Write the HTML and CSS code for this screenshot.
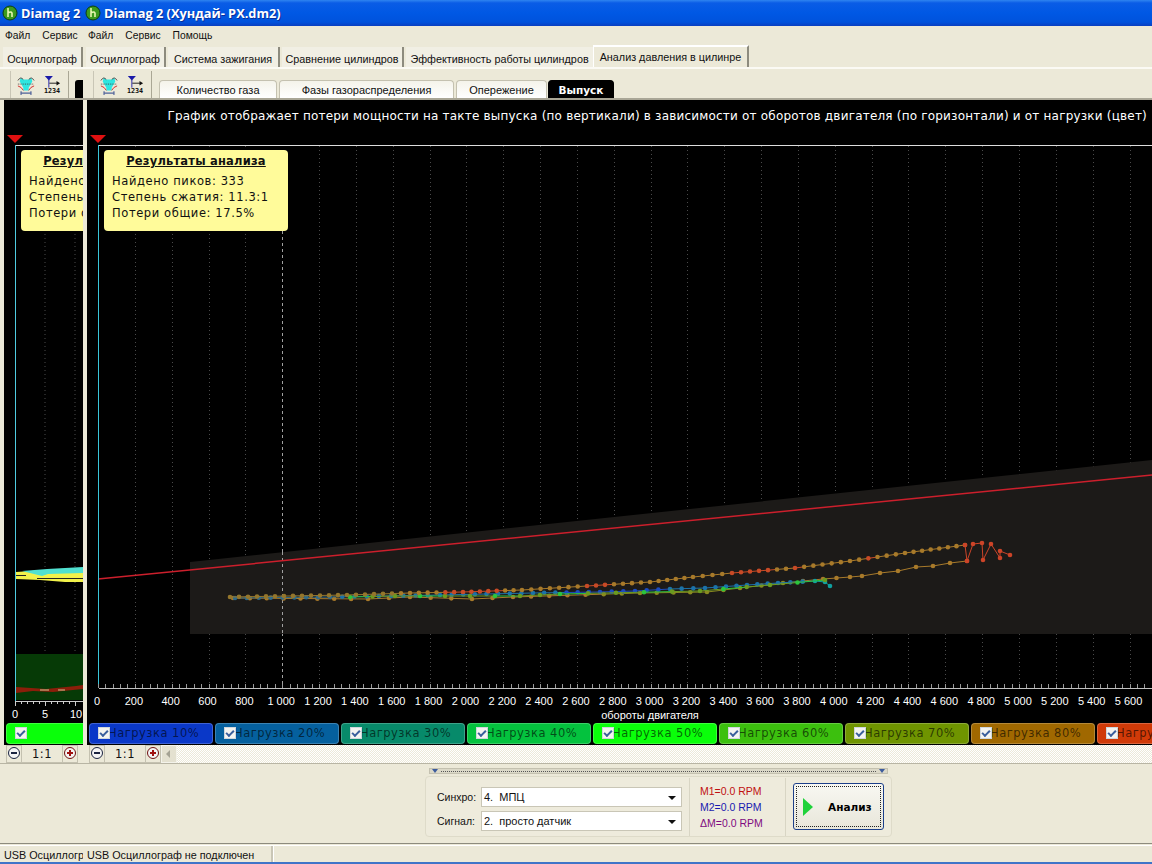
FILE: index.html
```html
<!DOCTYPE html>
<html lang="ru">
<head>
<meta charset="utf-8">
<title>Diamag 2</title>
<link rel="stylesheet" href="styles.css">
</head>
<body>

<!-- back window, mostly covered by the front one -->
<div class="window back">
    <div class="titlebar">
        <svg class="app-icon" viewBox="0 0 16 16"><circle cx="8" cy="8" r="7" fill="#3c9a1e" stroke="#0d3d12"/><path d="M6 3v9M6 8q3-2 4 0v4" fill="none" stroke="#e6f5b0" stroke-width="1.6"/></svg>
        <span>Diamag 2</span>
    </div>
    <div class="menubar"><span>Файл</span><span>Сервис</span></div>
    <div class="tabs back-tabs"><div class="tab">Осциллограф</div></div>
    <div class="toolrow">
        <div class="tools">
            <svg class="tool" viewBox="0 0 20 22"><use href="#icon-scope"/></svg>
            <svg class="tool" viewBox="0 0 20 22"><use href="#icon-marker"/></svg>
        </div>
        <div class="back-subtab"></div>
    </div>
    <div class="chart">
        <svg class="plot" viewBox="4 100 79 623" width="79" height="623">
            <path d="M23 135H7l8 8z" fill="#e01010"/>
            <path d="M45 146V700M75 146V700" stroke="#4a4a4a" stroke-dasharray="1 3"/>
            <rect x="16" y="654" width="67" height="46" fill="#063a06"/>
            <path d="M16 687l30 2 30-3 7-1v4l-30 3-20-1-17 2z" fill="#8c1e0a"/>
            <path d="M40 690h9M58 690h7" stroke="#c8c890"/>
            <path d="M16 572l30-2 37-2v14l-18 0-25-2-24-1z" fill="#f2f24a"/>
            <path d="M22 571l25-2 36-2v6l-35 1-6 2-8-2z" fill="#50e0d0"/>
            <path d="M16 575.500h10M37 578.500h46" stroke="#222" fill="none"/>
            <path d="M15.500 145V701" stroke="#4ecbe0"/>
            <path d="M16 145.500H83" stroke="#ddd"/>
            <path d="M16 701.500H83" stroke="#ccc"/>
            <path d="M15.500 701v5M45.500 701v5M75.500 701v5M21.500 701v3M27.500 701v3M33.500 701v3M39.500 701v3M51.500 701v3M57.500 701v3M63.500 701v3M69.500 701v3" stroke="#ccc"/>
            <text class="tick" x="15" y="718">0</text>
            <text class="tick" x="45" y="718">5</text>
            <text class="tick" x="76" y="718">10</text>
        </svg>
        <div class="tip tip-back">
            <div class="tip-title">Результаты анализа</div>
            <div>Найдено пиков: 333</div>
            <div>Степень сжатия: 11.3:1</div>
            <div>Потери общие: 17.5%</div>
        </div>
        <div class="loads"><div class="load load-back"><i class="check"></i></div></div>
    </div>
    <div class="zoomrow">
        <button class="round minus"></button><span class="ratio">1:1</span><button class="round plus"></button>
    </div>
    <div class="spacer"></div>
    <div class="statusbar"><div class="status-cell">USB Осциллограф не подключен</div></div>
    <div class="taskstrip"></div>
</div>

<!-- front window -->
<div class="window front">
    <div class="titlebar">
        <svg class="app-icon" viewBox="0 0 16 16"><circle cx="8" cy="8" r="7" fill="#3c9a1e" stroke="#0d3d12"/><path d="M6 3v9M6 8q3-2 4 0v4" fill="none" stroke="#e6f5b0" stroke-width="1.6"/></svg>
        <span>Diamag 2 (Хундай- РХ.dm2)</span>
    </div>
    <div class="menubar"><span>Файл</span><span>Сервис</span><span>Помощь</span></div>
    <div class="tabs">
        <div class="tab">Осциллограф</div>
        <div class="tab">Система зажигания</div>
        <div class="tab">Сравнение цилиндров</div>
        <div class="tab">Эффективность работы цилиндров</div>
        <div class="tab active">Анализ давления в цилинре</div>
    </div>
    <div class="toolrow">
        <div class="tools">
            <svg class="tool" viewBox="0 0 20 22">
                <g id="icon-scope">
                    <path d="M4 3l3 2h6l3-2 1 4-4 7v3H7v-3L3 7z" fill="#2ee6e0"/>
                    <path d="M1 6q3-5 6-1M13 5q3-4 6 1" fill="none" stroke="#444"/>
                    <path d="M1 10h18" stroke="#444" stroke-dasharray="1 1"/>
                    <path d="M1 12q4 1 6 5M13 17q2-4 6-5" fill="none" stroke="#d02020"/>
                    <path d="M4.500 18v4M15.500 18v4M5 20h10" stroke="#102a80"/>
                </g>
            </svg>
            <svg class="tool" viewBox="0 0 20 22">
                <g id="icon-marker">
                    <path d="M2 1h9l-4.500 5z" fill="#1a1aa8"/>
                    <path d="M6.500 5v9" stroke="#1a1aa8"/>
                    <path d="M7 9h9" stroke="#111"/>
                    <path d="M15 6.500l4 2.500-4 2.500z" fill="#111"/>
                    <text class="tool-num" x="1" y="20">1234</text>
                </g>
            </svg>
        </div>
        <div class="subtabs">
            <div class="subtab">Количество газа</div>
            <div class="subtab">Фазы газораспределения</div>
            <div class="subtab">Опережение</div>
            <div class="subtab active">Выпуск</div>
        </div>
    </div>
    <div class="chart">
        <div class="caption">График отображает потери мощности на такте выпуска (по вертикали) в зависимости от оборотов двигателя (по горизонтали) и от нагрузки (цвет)</div>
        <svg class="plot" id="plot" viewBox="87 133 1065 590" width="1065" height="590"></svg>
        <div class="tip tip-front">
            <div class="tip-title">Результаты анализа</div>
            <div>Найдено пиков: 333</div>
            <div>Степень сжатия: 11.3:1</div>
            <div>Потери общие: 17.5%</div>
        </div>
        <div class="loads">
            <div class="load l10"><i class="check"></i>Нагрузка 10%</div>
            <div class="load l20"><i class="check"></i>Нагрузка 20%</div>
            <div class="load l30"><i class="check"></i>Нагрузка 30%</div>
            <div class="load l40"><i class="check"></i>Нагрузка 40%</div>
            <div class="load l50"><i class="check"></i>Нагрузка 50%</div>
            <div class="load l60"><i class="check"></i>Нагрузка 60%</div>
            <div class="load l70"><i class="check"></i>Нагрузка 70%</div>
            <div class="load l80"><i class="check"></i>Нагрузка 80%</div>
            <div class="load l90"><i class="check"></i>Нагрузка 90%</div>
        </div>
    </div>
    <div class="zoomrow">
        <button class="round minus"></button><span class="ratio">1:1</span><button class="round plus"></button>
        <button class="scroll-left"></button>
        <div class="scroll-track"></div>
    </div>
    <div class="spacer">
        <div class="panel-wrap">
            <div class="collapse"><i></i><span></span><i></i></div>
            <div class="panel">
                <div class="fields">
                    <label>Синхро:</label><div class="combo">4.&nbsp; МПЦ</div>
                    <label>Сигнал:</label><div class="combo">2.&nbsp; просто датчик</div>
                </div>
                <div class="rpm">
                    <div class="m1">M1=0.0 RPM</div>
                    <div class="m2">M2=0.0 RPM</div>
                    <div class="dm">ΔM=0.0 RPM</div>
                </div>
                <button class="run"><span class="run-inner"><i class="play"></i><b>Анализ</b></span></button>
            </div>
        </div>
    </div>
    <div class="statusbar">
        <div class="status-cell">USB Осциллограф не подключен</div>
        <div class="status-rest"></div>
    </div>
    <div class="taskstrip"></div>
</div>

<script src="script.js"></script>
</body>
</html>
```

FILE: styles.css
```css
html, body {
    margin: 0;
    padding: 0;
    width: 100%;
    height: 100%;
    overflow: hidden;
    background: #ece9d8;
}
body {
    position: relative;
    font-family: "Liberation Sans", Arial, sans-serif;
    font-size: 11px;
    color: #111;
}
button {
    padding: 0;
    font: inherit;
}

/* windows */
.window {
    position: absolute;
    top: 0;
    height: 864px;
    display: flex;
    flex-direction: column;
    overflow: hidden;
    background: #ece9d8;
}
.back {
    left: 0;
    width: 83px;
}
.front {
    left: 83px;
    width: 1069px;
}
.titlebar {
    height: 26px;
    flex: none;
    display: flex;
    align-items: center;
    gap: 3px;
    padding-left: 2px;
    color: #fff;
    font-family: "Open Sans", sans-serif;
    font-weight: 700;
    font-size: 12.800px;
    white-space: nowrap;
    text-shadow: 1px 1px 0 #0a2f9a;
    background: linear-gradient(#2f84f0 0, #0a5ce6 3px, #0058e4 50%, #0052dc 85%, #0a3fc0 100%);
}
.app-icon {
    width: 16px;
    height: 16px;
    flex: none;
}
.menubar {
    height: 19px;
    flex: none;
    display: flex;
    align-items: center;
    gap: 12px;
    padding: 0 0 0 5px;
    font-size: 10.300px;
    white-space: nowrap;
}

/* top tabs */
.tabs {
    height: 22px;
    flex: none;
    display: flex;
    align-items: flex-end;
    gap: 2px;
    padding-left: 3px;
    border-bottom: 2px solid #fbfaf4;
    white-space: nowrap;
}
.tab {
    height: 20px;
    box-sizing: border-box;
    line-height: 24px;
    text-align: center;
    background: #f1efe4;
    border-right: 2px solid #8d8b7e;
    font-size: 10.800px;
    flex: none;
    width: 80px;
}
.tab:nth-child(2) { width: 112px; }
.tab:nth-child(3) { width: 122px; }
.tab:nth-child(4) { width: 187px; margin-right: -2px; border-right: none; }
.tab.active {
    width: 156px;
    height: 22px;
    line-height: 20px;
    background: #ece9d8;
    border-top: 2px solid #fff;
    border-left: 1px solid #fff;
}
.back-tabs .tab { width: 80px; }

/* tool row */
.toolrow {
    height: 29px;
    flex: none;
    display: flex;
    align-items: flex-end;
    border-bottom: 2px solid #a9a696;
}
.tools {
    height: 27px;
    width: 59px;
    margin: 0 0 0 10px;
    flex: none;
    display: flex;
    gap: 8px;
    align-items: center;
    padding-left: 6px;
    box-sizing: border-box;
    border-left: 1px solid #c9c6b6;
    border-right: 1px solid #aaa795;
}
.tool {
    width: 18px;
    height: 20px;
    flex: none;
}
.tool-num {
    font-family: "DejaVu Sans Mono", monospace;
    font-size: 7.500px;
    font-weight: 700;
    fill: #111;
}
.subtabs {
    display: flex;
    gap: 2px;
    margin-left: 7px;
}
.subtab {
    width: 118px;
    height: 18px;
    box-sizing: border-box;
    line-height: 19px;
    text-align: center;
    font-size: 11px;
    border: 1px solid #c4c1b0;
    border-bottom: none;
    border-radius: 4px 4px 0 0;
    background: linear-gradient(#f4f3ea, #ffffff);
    white-space: nowrap;
}
.subtab:nth-child(2) { width: 175px; }
.subtab:nth-child(3) { width: 91px; }
.subtab.active {
    width: 66px;
    margin-left: -1px;
    background: #000;
    border-color: #000;
    color: #fff;
    font-family: "DejaVu Sans", sans-serif;
    font-weight: 700;
    font-size: 10.500px;
}
.back-subtab {
    width: 8px;
    height: 18px;
    margin-left: 6px;
    background: #000;
    border-radius: 3px 0 0 0;
}

/* chart */
.chart {
    position: relative;
    height: 645px;
    flex: none;
    margin-left: 4px;
    background: #000;
    overflow: hidden;
}
.caption {
    height: 33px;
    box-sizing: border-box;
    padding: 9px 5px 0 0;
    text-align: right;
    color: #fff;
    font-family: "DejaVu Sans", sans-serif;
    font-size: 12px;
    letter-spacing: .2px;
    white-space: nowrap;
}
.plot {
    display: block;
}
.tick {
    font-family: "Liberation Sans", sans-serif;
    font-size: 11px;
    fill: #fff;
    text-anchor: middle;
}
.axis-title {
    font-family: "Liberation Sans", sans-serif;
    font-size: 11px;
    fill: #fff;
    text-anchor: middle;
}
.tip {
    position: absolute;
    top: 50px;
    left: 17px;
    box-sizing: border-box;
    width: 184px;
    height: 81px;
    padding: 4px 8px;
    background: #fffb9a;
    border-radius: 4px;
    font-family: "DejaVu Sans", sans-serif;
    font-size: 11.500px;
    line-height: 16px;
    letter-spacing: .6px;
    white-space: nowrap;
}
.tip-title {
    text-align: center;
    font-weight: 700;
    text-decoration: underline;
    letter-spacing: .2px;
    height: 19px;
    line-height: 14px;
}
.loads {
    height: 22px;
    display: flex;
    gap: 2px;
    padding-left: 2px;
    overflow: hidden;
}
.load {
    position: relative;
    width: 124px;
    flex: none;
    box-sizing: border-box;
    height: 21px;
    padding-left: 19px;
    border-radius: 4px;
    line-height: 21px;
    font-family: "DejaVu Sans", sans-serif;
    font-size: 11.500px;
    letter-spacing: .5px;
    white-space: nowrap;
    color: rgba(0, 0, 0, .62);
    box-shadow: inset 0 0 0 1px rgba(255, 255, 255, .22);
}
.check {
    position: absolute;
    left: 9px;
    top: 4px;
    width: 12px;
    height: 12px;
    background: #f4f4f0;
    border: 1px solid #cfd6dc;
    box-sizing: border-box;
}
.check::after {
    content: "";
    position: absolute;
    left: 1px;
    top: 2px;
    width: 6px;
    height: 3px;
    border-left: 2px solid #3a5f9c;
    border-bottom: 2px solid #3a5f9c;
    transform: rotate(-45deg);
}
.l10 { background: #0a38c8; }
.l20 { background: #05609e; }
.l30 { background: #078a6a; }
.l40 { background: #04c23e; }
.l50 { background: #0aff0a; }
.l60 { background: #3cc00e; }
.l70 { background: #6f9400; }
.l80 { background: #a06800; }
.l90 { background: #d03a08; }
.load-back { background: #0aff0a; width: 90px; }

/* zoom row */
.zoomrow {
    height: 18px;
    flex: none;
    display: flex;
    align-items: stretch;
    padding-left: 6px;
    border-bottom: 1px solid #b8b5a4;
}
.round {
    position: relative;
    width: 16px;
    border: 1px solid #c4c1b0;
    background: #ece9d8;
    flex: none;
}
.round::before {
    content: "";
    position: absolute;
    left: 1px;
    top: 1px;
    width: 10px;
    height: 10px;
    border: 1px solid #1a2340;
    border-radius: 50%;
    background: #f4f4f4;
    background-image: linear-gradient(#1a2340, #1a2340);
    background-size: 6px 2px;
    background-position: center;
    background-repeat: no-repeat;
}
.plus::before {
    border-color: #701010;
    background-image: linear-gradient(#a01010, #a01010), linear-gradient(#a01010, #a01010);
    background-size: 6px 2px, 2px 6px;
}
.ratio {
    width: 40px;
    flex: none;
    text-align: center;
    line-height: 19px;
    font-family: "DejaVu Sans", sans-serif;
    font-size: 11.500px;
    letter-spacing: .5px;
    border-bottom: 1px solid #c4c1b0;
}
.scroll-left {
    position: relative;
    width: 16px;
    flex: none;
    background: #e4e1d0;
    border: 1px solid #f4f3ea;
}
.scroll-left::before {
    content: "";
    position: absolute;
    left: 4px;
    top: 4px;
    border: 4px solid transparent;
    border-left: none;
    border-right-color: #a5a394;
}
.scroll-track {
    flex: 1;
    background: repeating-conic-gradient(#ece9d8 0 25%, #ffffff 0 50%) 0 0 / 2px 2px;
}

/* bottom panel */
.spacer {
    height: 79px;
    flex: none;
    display: flex;
    border-bottom: 1px solid #8d8b7e;
}
.panel-wrap {
    margin: 4px 0 0 342px;
    width: 467px;
}
.collapse {
    height: 4px;
    margin: 0 4px;
    display: flex;
    align-items: center;
    padding: 0 2px;
    gap: 3px;
    background: #dcd9c8;
    border: 1px solid #c4c1b0;
}
.collapse i {
    width: 0;
    border: 3px solid transparent;
    border-top: 4px solid #3d5c9c;
    border-bottom: none;
}
.collapse span {
    flex: 1;
    border-top: 1px dotted #555;
}
.panel {
    margin-top: 2px;
    height: 61px;
    box-sizing: border-box;
    display: flex;
    align-items: center;
    border: 1px solid #dedbc9;
    border-radius: 4px;
    background: #eeebdc;
    padding-left: 11px;
}
.fields {
    display: grid;
    grid-template-columns: 44px 201px;
    row-gap: 4px;
    margin-top: 5px;
    align-items: center;
    font-size: 10.500px;
}
.combo {
    position: relative;
    height: 20px;
    box-sizing: border-box;
    border: 1px solid #c9c6b6;
    background: #fff;
    padding-left: 2px;
    line-height: 18px;
    font-size: 11px;
}
.combo::after {
    content: "";
    position: absolute;
    right: 5px;
    top: 8px;
    border: 4px solid transparent;
    border-top: 4px solid #111;
    border-bottom: none;
}
.rpm {
    margin-left: 7px;
    width: 97px;
    padding: 5px 0 5px 10px;
    box-sizing: border-box;
    border-left: 1px solid #d8d5c4;
    border-right: 1px solid #d8d5c4;
    font-size: 10.500px;
    line-height: 16px;
    white-space: nowrap;
}
.m1 { color: #c01010; }
.m2 { color: #1a1ab0; }
.dm { color: #800a80; }
.run {
    margin-left: 7px;
    width: 91px;
    height: 47px;
    padding: 2px;
    border: 1px solid #1c3f8a;
    border-radius: 3px;
    background: linear-gradient(#f8f8f2, #e8e6da);
}
.run-inner {
    display: flex;
    align-items: center;
    height: 100%;
    box-sizing: border-box;
    border: 1px dotted #222;
    padding-left: 6px;
}
.play {
    width: 0;
    border-left: 10px solid #1fd23a;
    border-top: 9px solid transparent;
    border-bottom: 9px solid transparent;
}
.run-inner b {
    margin-left: 15px;
    font-family: "DejaVu Sans", sans-serif;
    font-size: 10.500px;
}

/* status */
.statusbar {
    height: 16px;
    flex: none;
    margin-top: 1px;
    display: flex;
    border-top: 1px solid #fff;
    font-size: 10.800px;
    white-space: nowrap;
    line-height: 18px;
}
.status-cell {
    width: 184px;
    padding-left: 4px;
    border-right: 2px solid #c9c6b6;
    flex: none;
}
.status-rest {
    flex: 1;
    border-left: 1px solid #fff;
}
.taskstrip {
    flex: 1;
    background: #3f74c8;
}
```

FILE: script.js
```js
const NS = "http://www.w3.org/2000/svg"
const plot = document.getElementById("plot")

function add(tag, attrs, text) {
    const el = document.createElementNS(NS, tag)
    Object.keys(attrs).forEach(k => el.setAttribute(k, attrs[k]))
    if (text) el.textContent = text
    plot.appendChild(el)
    return el
}

// rpm -> pixel, page coordinates
const xOf = rpm => 98 + rpm * 0.1842

// walk a polyline and return points every `step` pixels
function along(anchors, step) {
    const out = []
    for (let i = 0; i < anchors.length - 1; i++) {
        const [x1, y1] = anchors[i]
        const [x2, y2] = anchors[i + 1]
        const n = Math.max(1, Math.round((x2 - x1) / step))
        for (let j = 0; j < n; j++) {
            out.push([x1 + (x2 - x1) * j / n, y1 + (y2 - y1) * j / n])
        }
    }
    out.push(anchors[anchors.length - 1])
    return out
}

function drawSeries(points, colorOf) {
    for (let i = 0; i < points.length - 1; i++) {
        add("line", {
            x1: points[i][0], y1: points[i][1], x2: points[i + 1][0], y2: points[i + 1][1],
            stroke: colorOf(points[i][0], i), "stroke-width": 1
        })
    }
    points.forEach((p, i) => {
        add("circle", { cx: p[0], cy: p[1], r: 2.3, fill: colorOf(p[0], i) })
    })
}

// grid
for (let rpm = 200; rpm <= 5800; rpm += 200) {
    if (rpm === 1000) continue
    const x = Math.round(xOf(rpm)) + 0.5
    add("path", { d: `M${x} 146V688`, stroke: "#4a4a4a", "stroke-dasharray": "1 3" })
}
add("path", { d: "M282.500 231V688", stroke: "#a0a0a0", "stroke-dasharray": "3 3" })

// grey band and the red fit line
add("path", { d: "M190 562L1152 460V634H190Z", fill: "#1c1a18" })
add("path", { d: "M282.500 552V634", stroke: "#a0a0a0", "stroke-dasharray": "3 3" })
add("path", { d: "M98 579L1152 475", stroke: "#cc1f2c", "stroke-width": 1.5, fill: "none" })

// frame
add("path", { d: "M98.500 145V688", stroke: "#39c6da" })
add("path", { d: "M99 145.500H1152", stroke: "#dddddd" })
add("path", { d: "M99 688.500H1152", stroke: "#c0c0c0" })
add("path", { d: "M106 135H90l8 8z", fill: "#e01010" })

// axis
for (let rpm = 0; rpm <= 5800; rpm += 40) {
    const x = Math.round(xOf(rpm)) + 0.5
    add("path", { d: `M${x} 684V688`, stroke: "#999" })
}
for (let rpm = 0; rpm <= 5600; rpm += 200) {
    const label = rpm >= 1000 ? `${Math.floor(rpm / 1000)} ${String(rpm % 1000).padStart(3, "0")}` : String(rpm)
    add("text", { class: "tick", x: xOf(rpm) - 1, y: 705 }, label)
}
add("text", { class: "axis-title", x: 650, y: 719 }, "обороты двигателя")

// measured points
const olive = "#94762c"
const orange = "#a87a2a"
const red = "#c84a26"

const lower = along([[233, 598], [368, 599], [410, 597], [472, 599], [513, 597], [640, 593], [707, 592], [740, 588], [783, 583], [823, 579], [850, 577], [862, 576], [880, 573], [898, 571], [916, 567], [933, 566], [950, 563], [967, 561]], 18)
drawSeries(lower, x => x > 960 ? red : (x > 600 && x < 800 ? "#8a8a20" : orange))

const mid = along([[235, 598], [330, 597], [440, 595], [533, 593], [600, 592], [635, 591], [670, 589], [705, 588], [747, 585], [778, 583], [815, 581], [825, 582], [830, 586]], 12)
drawSeries(mid, x => x < 340 ? "#2f6a8a" : (x < 660 && x > 560 ? "#1c4cc0" : (x > 812 ? "#10a0a0" : "#1c72a8")))

const green = along([[350, 597], [395, 596], [520, 596], [560, 594], [700, 591], [770, 585], [825, 580]], 26)
drawSeries(green, (x, i) => i % 3 === 0 ? "#2cc43c" : "#6a9a20")

const upper = along([[230, 597], [347, 595], [410, 593], [463, 592], [522, 590], [587, 586], [650, 582], [693, 577], [732, 573], [795, 568], [850, 561], [905, 553], [965, 545]], 9)
drawSeries(upper, (x, i) => {
    if ((x > 445 && x < 500) || (x > 580 && x < 610) || (x > 725 && x < 770) || Math.abs(x - 795) < 3 || Math.abs(x - 868) < 3) return red
    return x < 400 ? olive : orange
})

const zigzag = [[965, 545], [967, 561], [973, 544], [982, 543], [983, 560], [991, 544], [1000, 558], [1000, 551], [1010, 555]]
drawSeries(zigzag, () => "#cc4428")
```
